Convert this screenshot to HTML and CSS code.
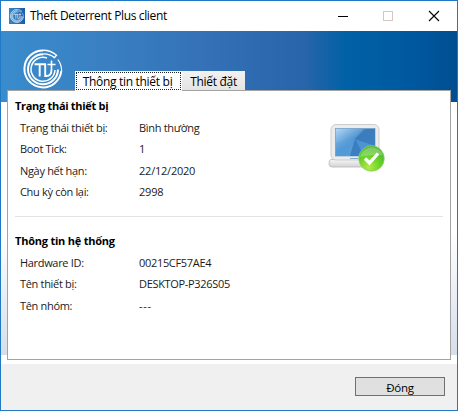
FILE: index.html
```html
<!DOCTYPE html>
<html lang="vi">
<head>
<meta charset="utf-8">
<title>Theft Deterrent Plus client</title>
<link rel="stylesheet" href="styles.css">
</head>
<body>
<svg width="0" height="0" class="defs">
  <defs>
    <symbol id="brand" viewBox="0 0 40 40">
      <g fill="none" stroke="#fff">
        <path d="M20 1.4A18.5 18.5 0 1 0 38.3 22" stroke-width="2"/>
        <path d="M38.6 22C38.6 17 36.8 13 34.8 10.5" stroke-width="1.2"/>
        <path d="M20 1.2C25 1.2 30 3 33.5 6.3L31.5 8.6C28.5 6 25 4.9 20.5 4.9" stroke-width="1.4"/>
        <path d="M20.5 5.3A15 15 0 1 0 35 20.5" stroke-width="2"/>
        <path d="M24 9A12 12 0 1 0 32 21" stroke-width="1.5"/>
        <path d="M11.5 15.2H23M16.7 15V27.5M22.2 15V27H23.5C27.5 27 28.5 24 28.5 20.5" stroke-width="1.9"/>
        <path d="M24.5 15.5H32.5M28.5 11.5V21" stroke-width="1.6"/>
      </g>
    </symbol>
  </defs>
</svg>
<div class="window">
  <header class="titlebar">
    <span class="app-icon"><svg width="14" height="14"><use href="#brand"/></svg></span>
    <span class="title">Theft Deterrent Plus client</span>
    <svg class="controls" width="110" height="12" viewBox="0 0 110 12">
      <path d="M2 6.5H12" stroke="#000"/>
      <rect x="47.5" y="1.5" width="9" height="9" fill="none" stroke="#d9c4c4"/>
      <path d="M93 1L103 11M103 1L93 11" stroke="#000" stroke-width="1.1"/>
    </svg>
  </header>
  <main class="body">
    <div class="tabs">
      <svg class="logo" width="40" height="40"><use href="#brand"/></svg>
      <div class="tab active"><span class="focus">Thông tin thiết bị</span></div>
      <div class="tab">Thiết đặt</div>
    </div>
    <div class="panel">
      <section class="status">
        <h2>Trạng thái thiết bị</h2>
        <dl>
          <dt class="long">Trạng thái thiết bị:</dt><dd class="long">Bình thường</dd>
          <dt>Boot Tick:</dt><dd>1</dd>
          <dt>Ngày hết hạn:</dt><dd>22/12/2020</dd>
          <dt>Chu kỳ còn lại:</dt><dd>2998</dd>
        </dl>
        <svg class="laptop" width="60" height="52" viewBox="0 0 60 52">
          <defs>
            <linearGradient id="screen" x1="0" y1="0" x2="1" y2="1">
              <stop offset="0" stop-color="#b5daf5"/><stop offset=".45" stop-color="#4a8fd0"/><stop offset="1" stop-color="#4f9edc"/>
            </linearGradient>
            <linearGradient id="shell" x1="0" y1="0" x2="0" y2="1">
              <stop offset="0" stop-color="#f7f7f7"/><stop offset="1" stop-color="#d2d2d2"/>
            </linearGradient>
            <radialGradient id="ok" cx=".4" cy=".85" r=".8">
              <stop offset="0" stop-color="#b2ec45"/><stop offset=".6" stop-color="#63d026"/><stop offset="1" stop-color="#50b534"/>
            </radialGradient>
          </defs>
          <path d="M3 37.5H51V45H4Q1 45 1 41.5Q1 38 3 37.5Z" fill="url(#shell)" stroke="#c2c2c2"/>
          <rect x="3" y="2.5" width="48" height="35.5" rx="5" fill="#ececec" stroke="#cdcdcd"/>
          <rect x="7.5" y="6.5" width="39.5" height="27.5" fill="url(#screen)" stroke="#6a9ac4" stroke-width=".7"/>
          <path d="M8 34V21L27 17L22 34Z" fill="#5ba4dd" opacity=".5"/>
          <path d="M27 17L36 7H47V24Z" fill="#235fa3" opacity=".4"/>
          <path d="M27 17L36 34H22Z" fill="#2467ae" opacity=".45"/>
          <path d="M22 36.5H30" stroke="#85a9cc"/>
          <circle cx="43.5" cy="36.5" r="12.8" fill="url(#ok)" stroke="#90d070" stroke-width=".7"/>
          <path d="M32 35A12 12 0 0 1 55 33Q46 32 32 35Z" fill="#fff" opacity=".25"/>
          <path d="M37 36.5L41.5 41L50 31.5" fill="none" stroke="#fff" stroke-width="3.3"/>
        </svg>
      </section>
      <section class="system">
        <h2>Thông tin hệ thống</h2>
        <dl>
          <dt>Hardware ID:</dt><dd class="id">00215CF57AE4</dd>
          <dt>Tên thiết bị:</dt><dd class="host">DESKTOP-P326S05</dd>
          <dt>Tên nhóm:</dt><dd class="dash">---</dd>
        </dl>
      </section>
    </div>
  </main>
  <footer class="footer"><button class="close">Đóng</button></footer>
</div>
</body>
</html>
```
FILE: styles.css
```css
* { box-sizing: border-box; }
body { margin: 0; font: 11px/16px "Open Sans", "Noto Sans", sans-serif; color: #1a1a1a; }
.defs { position: absolute; }
.window {
  width: 458px; height: 411px; display: flex; flex-direction: column;
  border: 1px solid #2079c5; background: #fff; overflow: hidden;
}
.titlebar { height: 30px; flex: none; display: flex; align-items: center; padding-left: 8px; }
.app-icon {
  width: 16px; height: 16px; display: flex; align-items: center; justify-content: center;
  background: linear-gradient(90deg, #3187c6, #1b5ba8);
}
.title { margin-left: 5px; font-size: 12px; letter-spacing: -.36px; color: #000; white-space: nowrap; }
.controls { margin-left: auto; margin-right: 11px; }
.body {
  height: 324px; flex: none; padding: 0 6px;
  background:
    linear-gradient(90deg, #398ccc 0, #397fc2 110px, #3470b5 210px, #2864a9 305px, #0061a6 345px, #00599f 410px, #004e92 456px) 0 0 / 100% 71px no-repeat,
    linear-gradient(#fff 71px, #fff 200px, #d5deea 324px);
}
.tabs { height: 59px; display: flex; align-items: flex-end; }
.logo { margin: 0 12px 1px 16px; }
.tab {
  height: 19px; width: 63px; padding-top: 1px; text-align: center; font-size: 12px; line-height: 20px; letter-spacing: -.3px;
  background: linear-gradient(#f2f2f2, #e4e4e4); color: #000; white-space: nowrap;
}
.tab.active { width: 107px; height: 20px; margin-bottom: -1px; padding: 1px; background: #fff; position: relative; }
.focus { display: block; height: 18px; line-height: 18px; padding-right: 2px; border: 1px dotted #222; }
.panel { width: 444px; height: 270px; border: 1px solid #a3a3a3; background: #fff; padding: 7px 7px 0; }
.status { height: 119px; border-bottom: 1px solid #e1e3e6; position: relative; }
.system { padding-top: 16px; }
h2 { margin: 0; font-size: 11px; line-height: 16px; letter-spacing: -.3px; color: #000; }
.system h2 { letter-spacing: -.22px; }
dl {
  margin: 3px 0 0; padding-left: 5px; display: grid;
  grid-template-columns: 119px 150px; grid-auto-rows: 21.4px; line-height: 21px;
}
dt, dd { margin: 0; white-space: nowrap; letter-spacing: -.22px; }
dt { letter-spacing: -.32px; }
.long { letter-spacing: -.3px; }
.id, .host { letter-spacing: -.32px; }
.dash { letter-spacing: .7px; }
.laptop { position: absolute; left: 313px; top: 24px; }
.footer {
  flex: 1; margin-top: 9px; padding: 13px 12px 0 0; display: flex; justify-content: flex-end; align-items: flex-start;
  background: #f0f0f0;
}
.close {
  width: 90px; height: 19px; padding: 1px 0 0; border: 1px solid #707070; background: #e0e0e0;
  font: 11.5px/17px "Open Sans", "Noto Sans", sans-serif; letter-spacing: -.3px; color: #000;
}
```
